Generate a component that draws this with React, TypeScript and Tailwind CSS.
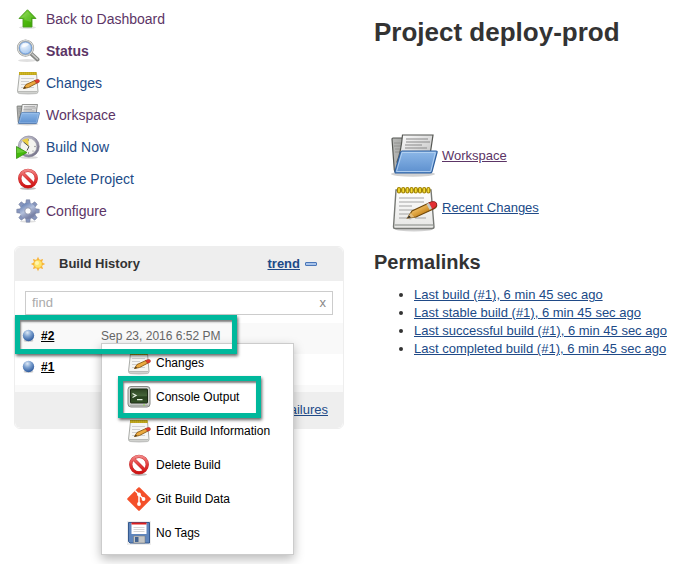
import { useId, useState, type ReactNode } from "react";

type IconProps = { className?: string };

function UpArrow({ className }: IconProps) {
  const id = useId();
  return (
    <svg viewBox="0 0 48 48" className={className} aria-hidden="true">
      <defs>
        <linearGradient id={id} x1="0" y1="0" x2="1" y2="1">
          <stop offset="0" stopColor="#9be05a" />
          <stop offset="0.5" stopColor="#4dbb0c" />
          <stop offset="1" stopColor="#3c9e05" />
        </linearGradient>
      </defs>
      <ellipse cx="23" cy="41" rx="17" ry="3" fill="#000" opacity="0.12" />
      <path d="M23 5.500 40 23H32V40H14V23H6Z" fill={`url(#${id})`} stroke="#4a9c20" strokeWidth="1.800" strokeLinejoin="round" />
      <path d="M23 9 36 21H30V30L17 26V21H10Z" fill="#fff" opacity="0.15" />
    </svg>
  );
}

function Magnifier({ className }: IconProps) {
  const id = useId();
  return (
    <svg viewBox="0 0 48 48" className={className} aria-hidden="true">
      <defs>
        <radialGradient id={id} cx="0.4" cy="0.3" r="0.8">
          <stop offset="0" stopColor="#f1f7fe" />
          <stop offset="1" stopColor="#8fb9ea" />
        </radialGradient>
      </defs>
      <ellipse cx="22" cy="43" rx="18" ry="3" fill="#000" opacity="0.12" />
      <path d="M30 29 43 41" stroke="#858784" strokeWidth="8" strokeLinecap="round" />
      <path d="M32 30 43 40" stroke="#c9cac8" strokeWidth="3" strokeLinecap="round" />
      <circle cx="19" cy="18" r="15" fill={`url(#${id})`} stroke="#9c9e9b" strokeWidth="4.500" />
      <circle cx="19" cy="18" r="15" fill="none" stroke="#e4e5e3" strokeWidth="2" />
      <circle cx="19" cy="18" r="12" fill="none" stroke="#5f8fd0" strokeWidth="1.5" />
      <path d="M11 17a9 9 0 0 1 15-6c-3 3-8 6-15 6Z" fill="#fff" opacity="0.7" />
    </svg>
  );
}

function Notepad({ className }: IconProps) {
  const id = useId();
  return (
    <svg viewBox="0 0 48 48" className={className} aria-hidden="true">
      <defs>
        <linearGradient id={`${id}p`} x1="0" y1="0" x2="0" y2="1">
          <stop offset="0" stopColor="#fff" />
          <stop offset="1" stopColor="#e6e6e4" />
        </linearGradient>
        <linearGradient id={`${id}w`} x1="0" y1="0" x2="1" y2="1">
          <stop offset="0.3" stopColor="#f8c76e" />
          <stop offset="0.7" stopColor="#c17d11" />
        </linearGradient>
      </defs>
      <ellipse cx="24" cy="45" rx="19" ry="2.5" fill="#000" opacity="0.18" />
      <path d="M6 6H41L44 43Q44 44.500 42 44.500H5Q3.500 44.500 3.500 43Z" fill={`url(#${id}p)`} stroke="#777975" strokeWidth="1.4" />
      <path d="M4.500 41H43" stroke="#a5a7a3" strokeWidth="1.5" />
      <path d="M9 14H34M9 18H34M9 22H22M9 26H29M9 30H20M9 34H17M25 34H36" stroke="#a4a4a4" strokeWidth="1.2" />
      {[8.5, 12.700, 16.900, 21.100, 25.300, 29.500, 33.700, 37.900].map((x) => (
        <rect key={x} x={x - 1} y="3.500" width="3" height="5.500" rx="1.500" fill="#f5dc35" stroke="#a08200" strokeWidth="1.2" />
      ))}
      <path d="m19 35 21-14" fill="none" stroke="#000" strokeWidth="3" opacity="0.1" />
      <path d="M17.500 34 22 27 40 18.500Q44 17 46 19.500 48 22 44.500 24.500L26 33Z" fill={`url(#${id}w)`} stroke="#70480b" strokeWidth="1.1" />
      <path d="m38.500 19 3-1.300q3.500-.7 5 1.300 1.500 3-2.500 5.300l-2 1Z" fill="#e32f32" stroke="#7f2020" strokeWidth="0.7" />
      <path d="m36.500 20 2.500-1 3 5.500-2.500 1.200Z" fill="#c9ccc7" />
      <path d="m17.500 34 3-5 4 4.300Z" fill="#e3be7f" />
      <path d="m17.500 34 1.500-2.500 2 2Z" fill="#222" />
    </svg>
  );
}

function NotepadSmall({ className }: IconProps) {
  return (
    <svg viewBox="0 0 24 24" className={className} aria-hidden="true">
      <ellipse cx="12" cy="22.500" rx="10" ry="1.200" fill="#000" opacity="0.15" />
      <path d="M3.500 2.500H20.500L22 20.500Q22 22 20.500 22H3Q1.500 22 1.500 20.500Z" fill="#f5f5f3" stroke="#aaaca8" />
      <path d="M2 20.500H21.500" stroke="#b9bab7" />
      <path d="M5 7.500H18M5 10.500H13M5 13.500H12M5 16.500H9M13 16.500H18" stroke="#cfcfcf" />
      <path d="M3 2.500H20.500" stroke="#a88f10" strokeWidth="3" />
      <path d="M3.500 2.500H20.500" stroke="#e4cb2c" strokeWidth="2.500" strokeDasharray="1.200 0.800" />
      <path d="M7.500 17.500 10 13.500 19 9.500 21 12 12.500 16.500Z" fill="#eba93f" stroke="#8a5a14" strokeWidth="0.900" />
      <path d="M18.500 9.500 21 8.500Q23.500 8 23.500 10T20.500 12.200Z" fill="#e33a2c" stroke="#9c3322" strokeWidth="0.500" />
      <path d="M7.200 17.700 8.800 15.400 10.200 17Z" fill="#4c3a1c" />
    </svg>
  );
}

function Folder({ className }: IconProps) {
  const id = useId();
  return (
    <svg viewBox="0 0 48 48" className={className} aria-hidden="true">
      <defs>
        <linearGradient id={`${id}b`} x1="0" y1="0" x2="0" y2="1">
          <stop offset="0" stopColor="#8db8e8" />
          <stop offset="1" stopColor="#5c8fce" />
        </linearGradient>
        <linearGradient id={`${id}g`} x1="0" y1="0" x2="1" y2="0">
          <stop offset="0" stopColor="#b9bab8" />
          <stop offset="1" stopColor="#777875" />
        </linearGradient>
        <linearGradient id={`${id}p`} x1="0" y1="0" x2="1" y2="1">
          <stop offset="0" stopColor="#fff" />
          <stop offset="1" stopColor="#bbb" />
        </linearGradient>
      </defs>
      <ellipse cx="23" cy="42" rx="22" ry="2.800" fill="#000" opacity="0.18" />
      <path d="M2 7Q2 6 3 6H12L14 8H40V40H6Q4.500 40 4.300 38Z" fill={`url(#${id}g)`} stroke="#555753" strokeWidth="1.200" />
      <path d="M4 11H12M4 14H12M5 17H11M5 20H11" stroke="#8a8c88" strokeWidth="0.800" />
      <path d="M12.500 3H43L39 30H7Q11 20 12.500 3Z" fill={`url(#${id}p)`} stroke="#555753" strokeWidth="1.200" />
      <path d="M16 7H38M16 10H40M15 13H32M15 16H37" stroke="#898989" strokeWidth="1.100" />
      <path d="M12 19H46Q47.500 19 47 20.500L42 39.500Q41.500 41 40 41H6Q4.500 41 5.100 39L10.500 20.500Q11 19 12 19Z" fill={`url(#${id}b)`} stroke="#2f609f" strokeWidth="1.200" />
      <path d="M12 20.500H45.300L40.700 39.500H6.500Z" fill="none" stroke="#b4d1f1" strokeWidth="0.900" />
    </svg>
  );
}

function ClockPlay({ className }: IconProps) {
  const id = useId();
  return (
    <svg viewBox="0 0 48 48" className={className} aria-hidden="true">
      <defs>
        <linearGradient id={id} x1="0" y1="0" x2="1" y2="1">
          <stop offset="0" stopColor="#d4d3e0" />
          <stop offset="1" stopColor="#69677e" />
        </linearGradient>
      </defs>
      <ellipse cx="26" cy="45" rx="18" ry="2.500" fill="#000" opacity="0.15" />
      <circle cx="25.500" cy="23" r="21" fill={`url(#${id})`} stroke="#78758b" strokeWidth="1.200" />
      <circle cx="25" cy="23" r="16.500" fill="#f4f4ef" stroke="#aaa9b4" strokeWidth="1.200" />
      <path d="M25 23 12 11Q17 6.500 25 7Z" fill="#eccf44" />
      <path d="m15 14 11 9-4 8" stroke="#555" strokeWidth="2" fill="none" />
      <g fill="#777">
        <circle cx="25" cy="10" r="1.300" />
        <circle cx="38" cy="23" r="1.300" />
        <circle cx="25" cy="36" r="1.300" />
        <circle cx="34" cy="32" r="1.200" />
      </g>
      <path d="M1 23 22 35 1 47Z" fill="#43b90d" stroke="#318c09" strokeWidth="1.500" />
      <path d="M2 25 18 34 2 36Z" fill="#80d94f" opacity="0.65" />
    </svg>
  );
}

function Forbidden({ className }: IconProps) {
  const id = useId();
  return (
    <svg viewBox="0 0 48 48" className={className} aria-hidden="true">
      <defs>
        <linearGradient id={id} gradientUnits="userSpaceOnUse" x1="0" y1="4" x2="0" y2="42">
          <stop offset="0" stopColor="#f49090" />
          <stop offset="0.500" stopColor="#e23c3c" />
          <stop offset="1" stopColor="#cc0d0d" />
        </linearGradient>
      </defs>
      <ellipse cx="24" cy="43" rx="16" ry="3" fill="#000" opacity="0.25" />
      <circle cx="24" cy="23" r="16.500" fill="#fff" stroke="#c23030" strokeWidth="6.500" />
      <path d="M12.500 11.500 35.500 34.500" stroke="#c23030" strokeWidth="6.500" />
      <circle cx="24" cy="23" r="16.500" fill="none" stroke={`url(#${id})`} strokeWidth="5" />
      <path d="M12.500 11.500 35.500 34.500" stroke={`url(#${id})`} strokeWidth="5" />
    </svg>
  );
}

function Gear({ className }: IconProps) {
  const id = useId();
  return (
    <svg viewBox="0 0 48 48" className={className} aria-hidden="true">
      <defs>
        <linearGradient id={id} x1="0" y1="0" x2="0.600" y2="1">
          <stop offset="0" stopColor="#6f87b7" />
          <stop offset="0.500" stopColor="#b3c0dc" />
          <stop offset="1" stopColor="#7b84a8" />
        </linearGradient>
      </defs>
      <ellipse cx="24" cy="45" rx="16" ry="2" fill="#000" opacity="0.12" />
      <g fill="#8796bd" stroke="#6d7797" strokeWidth="1">
        {[0, 45, 90, 135, 180, 225, 270, 315].map((a) => (
          <path key={a} d="M19 12 20.500 1.500H27.500L29 12Z" transform={`rotate(${a} 24 24)`} />
        ))}
      </g>
      <circle cx="24" cy="24" r="11.500" fill="none" stroke={`url(#${id})`} strokeWidth="10" />
      <circle cx="24" cy="24" r="6.500" fill="#fff" stroke="#6d7797" strokeWidth="1.500" />
    </svg>
  );
}

function Terminal({ className }: IconProps) {
  const id = useId();
  return (
    <svg viewBox="0 0 48 48" className={className} aria-hidden="true">
      <defs>
        <linearGradient id={id} x1="0" y1="0" x2="0" y2="1">
          <stop offset="0" stopColor="#2b4221" />
          <stop offset="0.500" stopColor="#46663b" />
          <stop offset="0.550" stopColor="#27411f" />
          <stop offset="1" stopColor="#345227" />
        </linearGradient>
      </defs>
      <rect x="2" y="3" width="44" height="41" rx="6" fill="#d0d1ce" stroke="#858783" strokeWidth="2" />
      <path d="M5 41H43" stroke="#aaaca8" strokeWidth="3" />
      <rect x="7" y="8" width="34" height="28" rx="1" fill={`url(#${id})`} stroke="#1d2c17" strokeWidth="2" />
      <path d="m11 17 7 4-7 4M20 29H31" stroke="#e8f2e4" strokeWidth="2.500" fill="none" />
      <circle cx="34" cy="40" r="1.500" fill="#8ae234" />
    </svg>
  );
}

function Git({ className }: IconProps) {
  return (
    <svg viewBox="0 0 48 48" className={className} aria-hidden="true">
      <path d="M22.500 1Q24 -.5 25.500 1L47 22.500Q48.500 24 47 25.500L25.500 47Q24 48.500 22.500 47L1 25.500Q-.5 24 1 22.500Z" fill="#f4502a" />
      <path d="m16 7 8 8V34M24 15l9 9" stroke="#fff" strokeWidth="3" fill="none" />
      <g fill="#fff">
        <circle cx="24" cy="15" r="3.800" />
        <circle cx="33" cy="24" r="3.800" />
        <circle cx="24" cy="34" r="3.800" />
      </g>
    </svg>
  );
}

function Floppy({ className }: IconProps) {
  return (
    <svg viewBox="0 0 48 48" className={className} aria-hidden="true">
      <path d="M0 0H48V48H0Z" fill="#ededed" />
      <path d="M3 3H45V44H6L3 41Z" fill="#5f86bd" stroke="#35598e" strokeWidth="2" />
      <rect x="9" y="4" width="30" height="22" fill="#fff" />
      <path d="M9 3H39V7H9Z" fill="#dc1f1f" />
      <path d="M13 13H35M13 17H35M13 21H35" stroke="#c8c8c8" strokeWidth="1.500" />
      <path d="M13 30H36V44H13Z" fill="#c3c5c5" stroke="#71767b" />
      <path d="M16 32H23V42H16Z" fill="#42628f" />
    </svg>
  );
}

function Sun({ className }: IconProps) {
  return (
    <svg viewBox="0 0 16 16" className={className} aria-hidden="true">
      <g fill="#f9b233">
        {[0, 45, 90, 135, 180, 225, 270, 315].map((a) => (
          <path key={a} d="M6.500 4 8 .8 9.500 4Z" transform={`rotate(${a} 8 8)`} />
        ))}
      </g>
      <circle cx="8" cy="8" r="4.200" fill="#fde66b" stroke="#f6b12f" strokeWidth="0.800" />
      <circle cx="7" cy="7" r="2" fill="#fff6b0" />
    </svg>
  );
}

function Ball({ className }: IconProps) {
  const id = useId();
  return (
    <svg viewBox="0 0 16 16" className={className} aria-hidden="true">
      <defs>
        <radialGradient id={id} cx="0.400" cy="0.250" r="0.750">
          <stop offset="0" stopColor="#dde8f5" />
          <stop offset="0.450" stopColor="#7ea2d0" />
          <stop offset="1" stopColor="#2d5a9e" />
        </radialGradient>
      </defs>
      <ellipse cx="8" cy="14.500" rx="6" ry="1.200" fill="#000" opacity="0.2" />
      <circle cx="8" cy="8" r="7" fill={`url(#${id})`} />
    </svg>
  );
}

const tasks = [
  { label: "Back to Dashboard", Icon: UpArrow, tone: "text-[#5c3566]" },
  { label: "Status", Icon: Magnifier, tone: "font-bold text-[#5c3566]" },
  { label: "Changes", Icon: NotepadSmall, tone: "text-[#204a87]" },
  { label: "Workspace", Icon: Folder, tone: "text-[#5c3566]" },
  { label: "Build Now", Icon: ClockPlay, tone: "text-[#204a87]" },
  { label: "Delete Project", Icon: Forbidden, tone: "text-[#204a87]" },
  { label: "Configure", Icon: Gear, tone: "text-[#5c3566]" },
];

const menuItems = [
  { label: "Changes", Icon: NotepadSmall },
  { label: "Console Output", Icon: Terminal, marked: true },
  { label: "Edit Build Information", Icon: NotepadSmall },
  { label: "Delete Build", Icon: Forbidden },
  { label: "Git Build Data", Icon: Git },
  { label: "No Tags", Icon: Floppy },
];

const permalinks = [
  "Last build (#1), 6 min 45 sec ago",
  "Last stable build (#1), 6 min 45 sec ago",
  "Last successful build (#1), 6 min 45 sec ago",
  "Last completed build (#1), 6 min 45 sec ago",
];

function Marker({ className }: { className: string }) {
  return (
    <span
      className={`pointer-events-none absolute z-20 border-5 border-[#00b89c] shadow-[1px_2px_3px_rgba(0,0,0,0.6),inset_1px_2px_2px_rgba(0,0,0,0.5)] ${className}`}
    />
  );
}

function BuildMenu() {
  return (
    <ul className="absolute top-5 left-[86px] z-10 w-[193px] border border-[#ccc] bg-white pt-0.5 pb-1 text-xs text-black shadow-[0_4px_10px_rgba(0,0,0,0.28)]">
      {menuItems.map(({ label, Icon, marked }) => (
        <li key={label} className="relative">
          <a href="#" className="flex h-[34px] items-center gap-[5px] pl-[25px]">
            <Icon className="size-6" />
            {label}
          </a>
          {marked && <Marker className="-top-1 left-4 h-[42px] w-[143px]" />}
        </li>
      ))}
    </ul>
  );
}

function BuildRow({ name, className, children }: { name: string; className: string; children?: ReactNode }) {
  return (
    <li className={`relative flex h-[31px] items-center pb-1.5 pl-[7px] text-xs ${className}`}>
      <Ball className="mr-1.5 size-[13px]" />
      <a href="#" className="w-[60px] font-bold text-black underline">
        {name}
      </a>
      {children}
    </li>
  );
}

function BuildHistory() {
  const [query, setQuery] = useState("");
  return (
    <section className="mt-[19px] ml-3.5 rounded-md border border-[#eee] bg-white text-[13px]">
      <header className="flex h-[34px] items-center rounded-t-md bg-[#eee] pr-[26px] pl-[15px]">
        <Sun className="mr-[13px] size-4" />
        <h2 className="flex-1 font-bold">Build History</h2>
        <a href="#" className="font-bold text-[#204a87] underline">
          trend
        </a>
        <button type="button" aria-label="Collapse" className="ml-[5px] h-1 w-3 rounded-[1px] border border-[#4a76b8] bg-[#a9c4ea]" />
      </header>
      <div className="mx-2.5 mt-2.5 mb-2 flex h-6 items-center border border-[#ccc] px-1.5">
        <input
          type="text"
          aria-label="Find builds"
          placeholder="find"
          value={query}
          onChange={(e) => setQuery(e.target.value)}
          className="min-w-0 flex-1 outline-none placeholder:text-[#aaa]"
        />
        <button type="button" aria-label="Clear" onClick={() => setQuery("")} className="text-[#888]">
          x
        </button>
      </div>
      <ul>
        <BuildRow name="#2" className="bg-[#f9f9f9]">
          <time className="text-[#666]">Sep 23, 2016 6:52 PM</time>
          <Marker className="-top-2 left-0 h-[39px] w-[222px]" />
          <BuildMenu />
        </BuildRow>
        <BuildRow name="#1" className="bg-white" />
      </ul>
      <footer className="border-t-[7px] border-[#f9f9f9]">
        <div className="flex h-9 items-center justify-end rounded-b-md bg-[#eee] pr-[15px]">
          <a href="#" className="text-[#204a87] underline">
            failures
          </a>
        </div>
      </footer>
    </section>
  );
}

export default function App() {
  return (
    <div className="flex min-h-screen gap-[30px] bg-white font-['Helvetica','Liberation_Sans',Arial,sans-serif] text-[#333]">
      <aside className="w-[344px] shrink-0 pt-[3px]">
        <nav>
          <ul className="pl-4 text-sm">
            {tasks.map(({ label, Icon, tone }) => (
              <li key={label}>
                <a href="#" className={`flex h-8 items-center gap-1.5 ${tone}`}>
                  <Icon className="size-6" />
                  {label}
                </a>
              </li>
            ))}
          </ul>
        </nav>
        <BuildHistory />
      </aside>
      <main className="min-w-0 flex-1 pt-4 text-[13px]">
        <h1 className="text-[26px] leading-8 font-bold whitespace-nowrap">Project deploy-prod</h1>
        <ul className="mt-[84px] flex flex-col gap-1 pl-4">
          <li>
            <a href="#" className="flex items-center gap-1 text-[#5c3566] underline">
              <Folder className="size-12" />
              Workspace
            </a>
          </li>
          <li>
            <a href="#" className="flex items-center gap-1 text-[#204a87] underline">
              <Notepad className="size-12" />
              Recent Changes
            </a>
          </li>
        </ul>
        <h2 className="mt-[18px] text-xl leading-6 font-bold">Permalinks</h2>
        <ul className="mt-3 list-disc pl-10 leading-[18px] whitespace-nowrap">
          {permalinks.map((text) => (
            <li key={text}>
              <a href="#" className="text-[#204a87] underline">
                {text}
              </a>
            </li>
          ))}
        </ul>
      </main>
    </div>
  );
}
